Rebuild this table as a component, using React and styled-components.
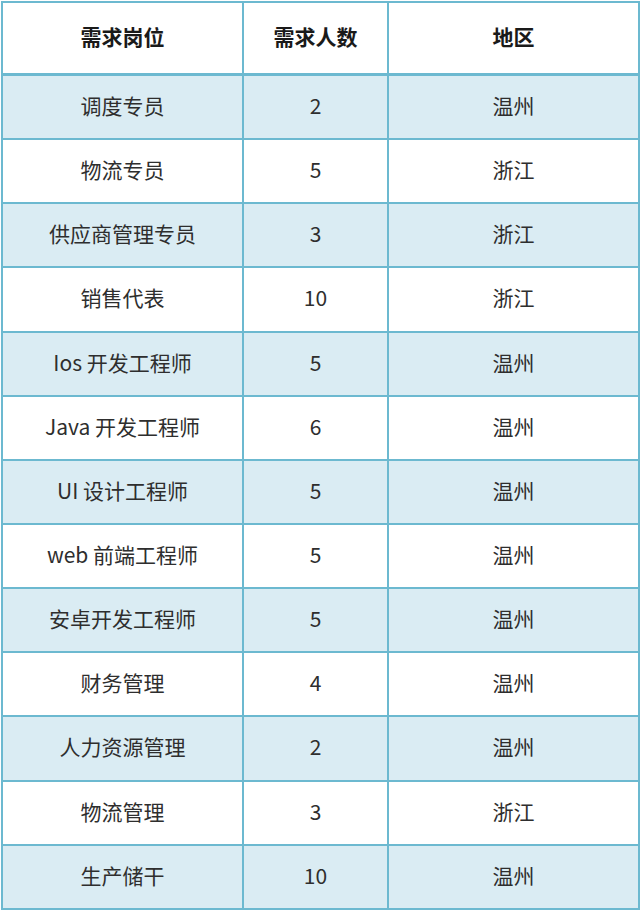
import React from "react";
import styled, { createGlobalStyle } from "styled-components";

const Global = createGlobalStyle`
  html, body { margin: 0; padding: 0; background: #ffffff; }
  body { font-family: "Noto Sans CJK SC", "Noto Sans", sans-serif; }
`;

const Wrap = styled.div`
  padding: 1px 2px 0 1px;
  width: 640px;
  box-sizing: border-box;
`;

const Table = styled.table`
  width: 637px;
  border-collapse: collapse;
  table-layout: fixed;
  border: 2px solid #6cb9d0;
`;

const Col = styled.col`
  width: ${(p) => p.$w}px;
`;

const HeadCell = styled.th`
  height: 67px;
  padding: 0 0 3px;
  border: 2px solid #6cb9d0;
  border-bottom-width: 3px;
  background: #ffffff;
  color: #1a1a1a;
  font-size: 21px;
  line-height: 1.2;
  font-weight: 700;
  text-align: center;
  vertical-align: middle;
`;

const Row = styled.tr`
  background: ${(p) => (p.$shade ? "#daecf3" : "#ffffff")};
`;

const Cell = styled.td`
  height: 59.15px;
  padding: 0 0 3px;
  border: 2px solid #6cb9d0;
  color: #2e2e2e;
  font-size: 21px;
  line-height: 1.2;
  font-weight: 400;
  text-align: center;
  vertical-align: middle;
`;

const rows = [
  ["调度专员", "2", "温州"],
  ["物流专员", "5", "浙江"],
  ["供应商管理专员", "3", "浙江"],
  ["销售代表", "10", "浙江"],
  ["Ios 开发工程师", "5", "温州"],
  ["Java 开发工程师", "6", "温州"],
  ["UI 设计工程师", "5", "温州"],
  ["web 前端工程师", "5", "温州"],
  ["安卓开发工程师", "5", "温州"],
  ["财务管理", "4", "温州"],
  ["人力资源管理", "2", "温州"],
  ["物流管理", "3", "浙江"],
  ["生产储干", "10", "温州"],
];

export default function App() {
  return (
    <>
      <Global />
      <Wrap>
        <Table>
          <colgroup>
            <Col $w={241} />
            <Col $w={145} />
            <Col $w={251} />
          </colgroup>
          <thead>
            <tr>
              <HeadCell>需求岗位</HeadCell>
              <HeadCell>需求人数</HeadCell>
              <HeadCell>地区</HeadCell>
            </tr>
          </thead>
          <tbody>
            {rows.map((r, i) => (
              <Row key={i} $shade={i % 2 === 0}>
                <Cell>{r[0]}</Cell>
                <Cell>{r[1]}</Cell>
                <Cell>{r[2]}</Cell>
              </Row>
            ))}
          </tbody>
        </Table>
      </Wrap>
    </>
  );
}
